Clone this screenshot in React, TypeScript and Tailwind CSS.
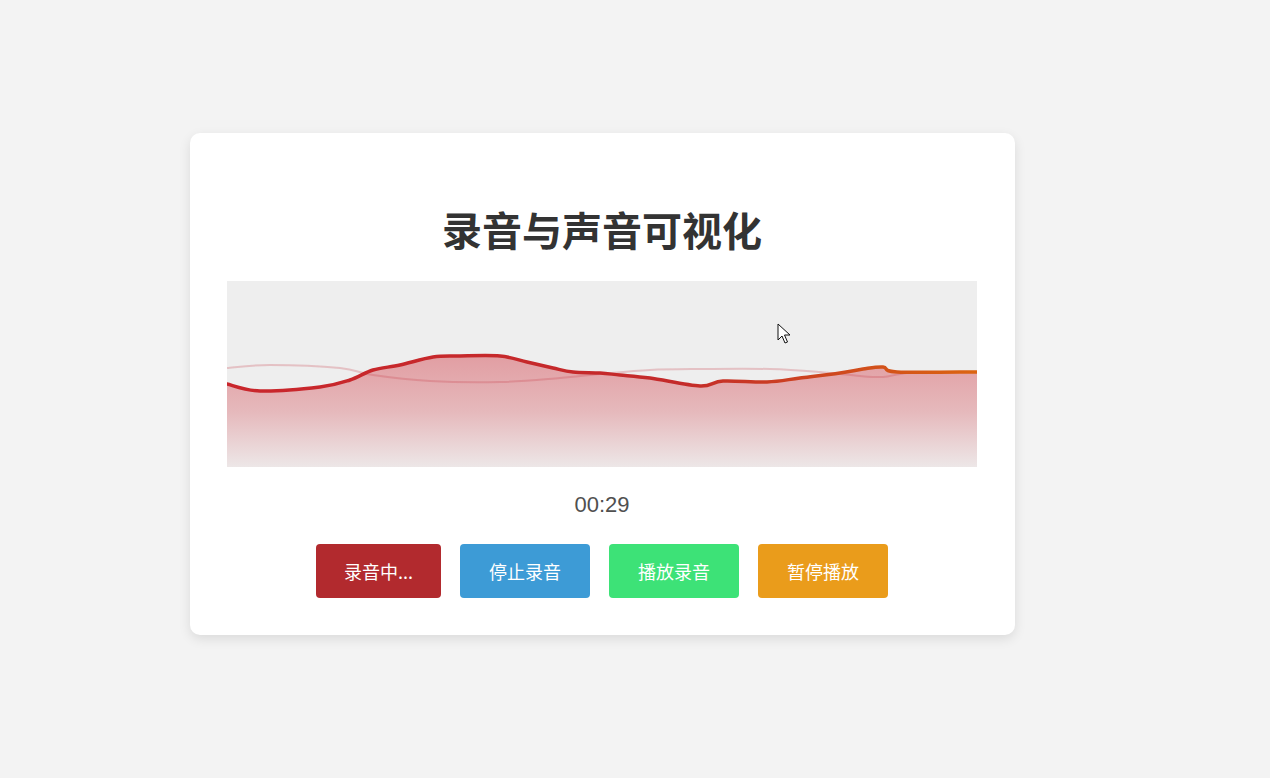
import React from 'react';

type Pt = [number, number];

// canvas is 750 x 186, points below are in canvas pixels
const W = 750;
const H = 186;

const livePts: Pt[] = [
  [0, 103], [33, 110], [93, 106], [123, 99], [146, 89], [173, 84], [206, 76],
  [233, 75], [273, 75], [300, 81], [326, 87], [346, 91], [373, 92], [393, 94],
  [423, 97], [473, 105], [496, 100], [540, 101], [573, 97], [613, 92], [636, 88],
  [656, 86], [670, 91], [750, 91],
];

const ghostPts: Pt[] = [
  [0, 87], [43, 84], [113, 87], [146, 94], [203, 100], [273, 101], [333, 97],
  [373, 93], [423, 89], [473, 88], [543, 88], [593, 91], [633, 95], [656, 96],
  [673, 93], [693, 91], [750, 91],
];

// catmull-rom -> cubic bezier so the trace looks smooth
const smooth = (pts: Pt[]) => {
  let d = `M${pts[0][0]},${pts[0][1]}`;
  for (let i = 0; i < pts.length - 1; i++) {
    const p0 = pts[i - 1] || pts[i];
    const p1 = pts[i];
    const p2 = pts[i + 1];
    const p3 = pts[i + 2] || p2;
    const c1x = p1[0] + (p2[0] - p0[0]) / 6;
    const c1y = p1[1] + (p2[1] - p0[1]) / 6;
    const c2x = p2[0] - (p3[0] - p1[0]) / 6;
    const c2y = p2[1] - (p3[1] - p1[1]) / 6;
    d += ` C${c1x.toFixed(1)},${c1y.toFixed(1)} ${c2x.toFixed(1)},${c2y.toFixed(1)} ${p2[0]},${p2[1]}`;
  }
  return d;
};

const Visualizer: React.FC = () => {
  const live = smooth(livePts);
  const ghost = smooth(ghostPts);
  return (
    <div className="relative mt-[28px] h-[186px] w-[750px] bg-[#eeeeee]">
      <svg width={W} height={H} viewBox={`0 0 ${W} ${H}`} className="block">
        <defs>
          <linearGradient id="fillGrad" x1="0" y1="75" x2="0" y2={H} gradientUnits="userSpaceOnUse">
            <stop offset="0" stopColor="#d23c46" stopOpacity="0.45" />
            <stop offset="0.5" stopColor="#d23c46" stopOpacity="0.3" />
            <stop offset="1" stopColor="#d23c46" stopOpacity="0.04" />
          </linearGradient>
          <linearGradient id="lineGrad" x1="0" y1="0" x2={W} y2="0" gradientUnits="userSpaceOnUse">
            <stop offset="0" stopColor="#c9262c" />
            <stop offset="0.6" stopColor="#c42a2a" />
            <stop offset="0.82" stopColor="#cf4a1e" />
            <stop offset="1" stopColor="#dc6410" />
          </linearGradient>
        </defs>
        <path d={`${live} L${W},${H} L0,${H} Z`} fill="url(#fillGrad)" />
        <path d={ghost} fill="none" stroke="#c83c46" strokeOpacity="0.25" strokeWidth="2" />
        <path d={live} fill="none" stroke="url(#lineGrad)" strokeWidth="3.5" strokeLinejoin="round" strokeLinecap="round" />
      </svg>
      {/* mouse pointer resting over the canvas */}
      <svg className="absolute left-[550px] top-[42px]" width="14" height="22" viewBox="0 0 14 22">
        <path d="M1,1 L1,17 L5,13 L8,20 L10.5,19 L7.5,12 L13,12 Z" fill="#fff" stroke="#111" strokeWidth="1" strokeLinejoin="round" />
      </svg>
    </div>
  );
};

const buttons = [
  { label: '录音中...', cls: 'bg-[#b22a2e] px-[28px]' },
  { label: '停止录音', cls: 'bg-[#3d9bd6] px-[29px]' },
  { label: '播放录音', cls: 'bg-[#3de277] px-[29px]' },
  { label: '暂停播放', cls: 'bg-[#ea9c1b] px-[29px]' },
];

export default function App() {
  return (
    <div className="min-h-screen bg-[#f3f3f3] pl-[190px] pt-[133px]" style={{ fontFamily: '"Liberation Sans", "Noto Sans CJK SC", sans-serif' }}>
      <div className="flex w-[825px] flex-col items-center rounded-[10px] bg-white pb-[37px] pl-[37px] pr-[38px] pt-[37px] shadow-[0_4px_12px_rgba(0,0,0,0.1)]">
        <h1 className="mt-[35px] text-[40px] font-bold leading-[48px] text-[#333]" style={{ fontFamily: '"Noto Sans CJK SC", sans-serif' }}>
          录音与声音可视化
        </h1>
        <Visualizer />
        <div className="mt-[23px] text-[22px] leading-[30px] text-[#505050]">00:29</div>
        <div className="mt-[24px] flex gap-[19px]">
          {buttons.map(b => (
            <button
              key={b.label}
              className={`h-[54px] rounded-[4px] text-[18px] text-white ${b.cls}`}
              style={{ fontFamily: '"Noto Sans CJK SC", sans-serif' }}
            >
              {b.label}
            </button>
          ))}
        </div>
      </div>
    </div>
  );
}
